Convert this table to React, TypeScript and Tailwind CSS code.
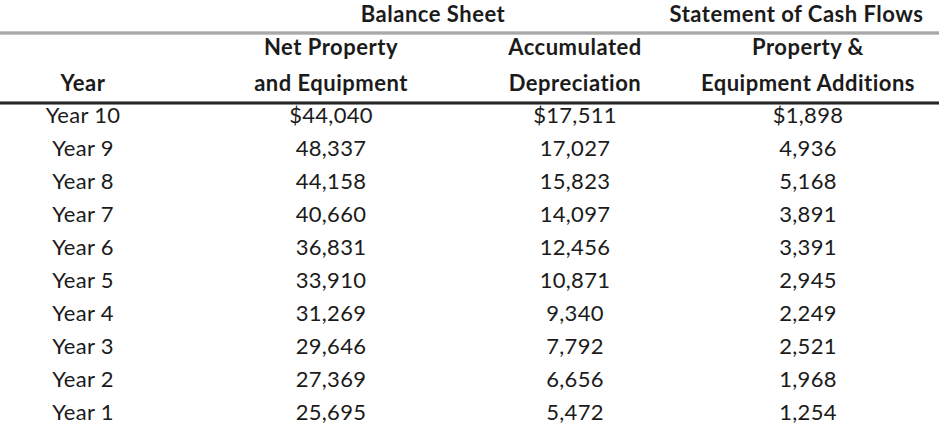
const rows = [
  ["Year 10", "$44,040", "$17,511", "$1,898"],
  ["Year 9", "48,337", "17,027", "4,936"],
  ["Year 8", "44,158", "15,823", "5,168"],
  ["Year 7", "40,660", "14,097", "3,891"],
  ["Year 6", "36,831", "12,456", "3,391"],
  ["Year 5", "33,910", "10,871", "2,945"],
  ["Year 4", "31,269", "9,340", "2,249"],
  ["Year 3", "29,646", "7,792", "2,521"],
  ["Year 2", "27,369", "6,656", "1,968"],
  ["Year 1", "25,695", "5,472", "1,254"],
];

const cols = "grid grid-cols-[166px_330px_158px_285px]";

export default function App() {
  return (
    <div
      className="w-[939px] h-[436px] overflow-hidden bg-white text-[#1b1b1b] text-[22px]"
      style={{ fontFamily: "Lato, 'Open Sans', sans-serif" }}
    >
      <div className={`${cols} h-[31px] font-bold leading-[27px] tracking-[0.5px]`}>
        <div />
        <div className="col-span-2 pl-[46px] text-center">Balance Sheet</div>
        <div className="text-center whitespace-nowrap">Statement of Cash Flows</div>
      </div>
      <div className="h-[4px] bg-[#a9a9a9] border-y border-[#c4c4c4]" />
      <div className={`${cols} font-bold leading-[24px] tracking-[0.5px] pb-[6px]`}>
        <div className="flex items-end justify-center">Year</div>
        <div className="text-center">
          <div>Net Property</div>
          <div className="mt-[12px]">and Equipment</div>
        </div>
        <div className="text-center">
          <div>Accumulated</div>
          <div className="mt-[12px]">Depreciation</div>
        </div>
        <div className="pl-[23px] text-center whitespace-nowrap">
          <div>Property &amp;</div>
          <div className="mt-[12px]">Equipment Additions</div>
        </div>
      </div>
      <div className="h-[4px] bg-[#262626] border-y border-[#8a8a8a]" />
      <div className="-mt-[2px]">
        {rows.map((r, i) => (
          <div key={i} className={`${cols} h-[33px] leading-[24px] tracking-[0.3px]`}>
            {r.map((c, j) => (
              <div key={j} className={`text-center ${j === 3 ? "pl-[23px]" : ""}`}>
                {c}
              </div>
            ))}
          </div>
        ))}
      </div>
    </div>
  );
}
